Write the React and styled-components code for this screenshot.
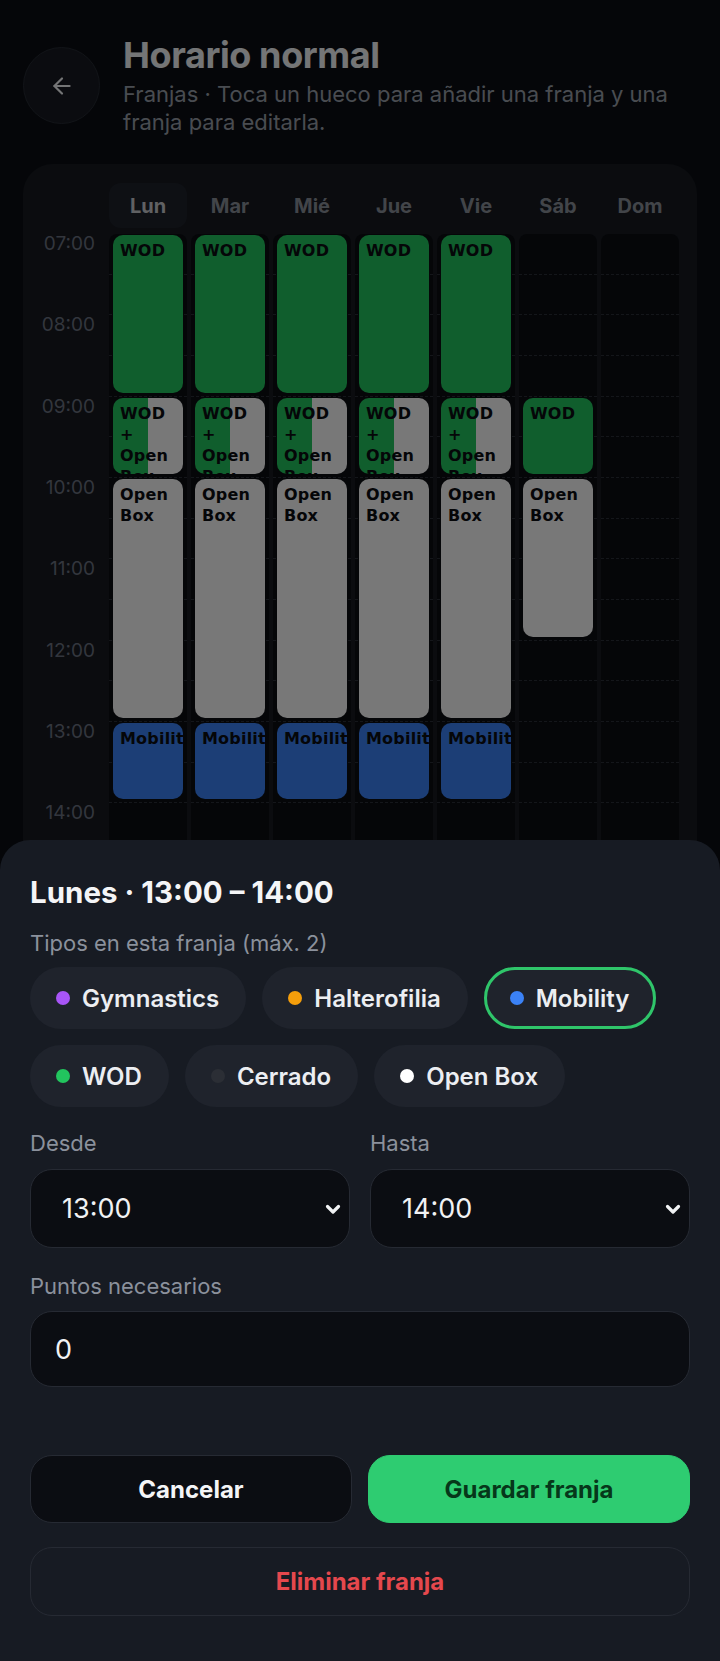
import React from "react";
import styled, { createGlobalStyle } from "styled-components";
import { ArrowLeft } from "lucide-react";

const GlobalStyle = createGlobalStyle`
  * { box-sizing: border-box; }
  body {
    margin: 0;
    background: #0c0e14;
    font-family: Inter, "Noto Sans", sans-serif;
  }
`;

const HOUR = 81.33;
const SLOT = HOUR / 2;
const START = 7;
const END = 22;

const TYPES = {
  wod: { label: "WOD", color: "#22c55e" },
  open: { label: "Open Box", color: "#fafafa" },
  mob: { label: "Mobility", color: "#3b82f6" },
};

const weekday = [
  { from: 7, to: 9, types: ["wod"] },
  { from: 9, to: 10, types: ["wod", "open"] },
  { from: 10, to: 13, types: ["open"] },
  { from: 13, to: 14, types: ["mob"] },
];

const days = [
  { name: "Lun", blocks: weekday, active: true },
  { name: "Mar", blocks: weekday },
  { name: "Mié", blocks: weekday },
  { name: "Jue", blocks: weekday },
  { name: "Vie", blocks: weekday },
  {
    name: "Sáb",
    blocks: [
      { from: 9, to: 10, types: ["wod"] },
      { from: 10, to: 12, types: ["open"] },
    ],
  },
  { name: "Dom", blocks: [] },
];

const chips = [
  { label: "Gymnastics", color: "#a855f7" },
  { label: "Halterofilia", color: "#f59e0b" },
  { label: "Mobility", color: "#3b82f6", selected: true },
  { label: "WOD", color: "#22c55e" },
  { label: "Cerrado", color: "#2b2e35" },
  { label: "Open Box", color: "#ffffff" },
];

const Screen = styled.div`
  position: relative;
  width: 720px;
  height: 1661px;
  overflow: hidden;
  background: #0c0e14;
`;

const Header = styled.header`
  display: flex;
  gap: 23px;
  padding: 34px 23px 0;
`;

const BackButton = styled.button`
  flex-shrink: 0;
  width: 77px;
  height: 77px;
  margin-top: 13px;
  border-radius: 50%;
  border: 1.5px solid #262a33;
  background: #181b22;
  color: #f3f4f6;
  display: flex;
  align-items: center;
  justify-content: center;
  padding: 0;
`;

const HeaderText = styled.div`
  display: flex;
  flex-direction: column;
`;

const Title = styled.h1`
  margin: 0;
  font-size: 36px;
  line-height: 42px;
  font-weight: 700;
  letter-spacing: -0.4px;
  color: #f3f4f6;
`;

const Subtitle = styled.p`
  margin: 4px 0 0;
  font-size: 22px;
  line-height: 28px;
  color: #9aa0aa;
`;

const Card = styled.section`
  margin: 28px 23px 0;
  padding: 19px 18px;
  background: #171a21;
  border-radius: 30px;
`;

const Row = styled.div`
  display: grid;
  grid-template-columns: 64px repeat(7, 1fr);
  column-gap: 4px;
`;

const DayLabel = styled.div`
  height: 45px;
  display: flex;
  align-items: center;
  justify-content: center;
  border-radius: 12px;
  font-size: 20px;
  font-weight: 700;
  background: ${(p) => (p.$active ? "#1f232b" : "transparent")};
  color: ${(p) => (p.$active ? "#c8cad0" : "#8b909a")};
`;

const Body = styled(Row)`
  margin-top: 6px;
`;

const TimeColumn = styled.div`
  display: flex;
  flex-direction: column;
`;

const HourLabel = styled.div`
  height: ${HOUR}px;
  flex-shrink: 0;
  padding-right: 10px;
  text-align: right;
  font-size: 19px;
  line-height: 20px;
  color: #6b7280;
`;

const DayColumn = styled.div`
  display: grid;
  grid-template-rows: repeat(${(END - START) * 2}, ${SLOT}px);
  background: #0b0d12;
  border-radius: 8px;
`;

const Slot = styled.div`
  grid-column: 1;
  grid-row: ${(p) => p.$row};
  border-bottom: 1px dashed #2a2e37;
`;

const Block = styled.div`
  grid-column: 1;
  grid-row: ${(p) => p.$start} / ${(p) => p.$end};
  margin: 1px 4px 4px;
  padding: 5px 7px;
  border-radius: 10px;
  overflow: hidden;
  background: ${(p) => p.$bg};
  font-family: "DejaVu Sans", sans-serif;
  font-weight: 700;
  font-size: 16px;
  line-height: 21px;
  letter-spacing: 0.2px;
  color: #0b0d12;
`;

const Overlay = styled.div`
  position: absolute;
  inset: 0;
  z-index: 5;
  background: rgba(0, 0, 0, 0.52);
`;

const Sheet = styled.div`
  position: absolute;
  left: 0;
  right: 0;
  bottom: 0;
  z-index: 6;
  background: #171b23;
  border-radius: 30px 30px 0 0;
  padding: 34px 30px 45px;
`;

const SheetTitle = styled.h2`
  margin: 0;
  font-size: 29.5px;
  line-height: 36px;
  font-weight: 700;
  color: #f4f5f7;
`;

const FieldLabel = styled.div`
  font-size: 22px;
  line-height: 28px;
  color: #8b919c;
  margin-top: ${(p) => p.$top || 0}px;
`;

const ChipWrap = styled.div`
  display: flex;
  flex-wrap: wrap;
  gap: 16px;
  margin-top: 10px;
`;

const Chip = styled.button`
  height: 62px;
  display: flex;
  align-items: center;
  gap: 12px;
  padding: 0 24px 0 23px;
  border-radius: 31px;
  border: 3px solid ${(p) => (p.$selected ? "#2fc56a" : "transparent")};
  background: #1f232c;
  font-family: inherit;
  font-size: 24px;
  font-weight: 600;
  color: #eceef2;
`;

const Dot = styled.span`
  width: 14px;
  height: 14px;
  border-radius: 50%;
  background: ${(p) => p.$color};
`;

const FieldGrid = styled.div`
  display: grid;
  grid-template-columns: 1fr 1fr;
  gap: 20px;
  margin-top: 22px;
`;

const Field = styled.div`
  display: flex;
  flex-direction: column;
  gap: 12px;
`;

const SelectBox = styled.div`
  position: relative;
  height: 79px;
`;

const Select = styled.select`
  width: 100%;
  height: 100%;
  appearance: none;
  background: #0b0d12;
  border: 1.5px solid #262a33;
  border-radius: 22px;
  color: #f1f2f4;
  font-family: inherit;
  font-size: 27px;
  padding: 0 31px;
`;

const Chevron = styled.svg`
  position: absolute;
  right: 8px;
  top: 50%;
  transform: translateY(-50%);
  pointer-events: none;
`;

const Input = styled.input`
  margin-top: 11px;
  width: 100%;
  height: 76px;
  background: #0b0d12;
  border: 1.5px solid #262a33;
  border-radius: 22px;
  color: #f1f2f4;
  font-family: inherit;
  font-size: 27px;
  padding: 0 24px;
`;

const ButtonRow = styled.div`
  display: grid;
  grid-template-columns: 1fr 1fr;
  gap: 16px;
  margin-top: 68px;
`;

const Button = styled.button`
  height: ${(p) => (p.$tall ? 69 : 68)}px;
  width: 100%;
  border-radius: 22px;
  font-family: inherit;
  font-size: 24px;
  font-weight: 700;
  border: 1.5px solid
    ${(p) => (p.$variant === "primary" ? "#2ecc71" : "#262a33")};
  background: ${(p) =>
    p.$variant === "primary"
      ? "#2ecc71"
      : p.$variant === "danger"
      ? "transparent"
      : "#0b0d12"};
  color: ${(p) =>
    p.$variant === "primary"
      ? "#06371a"
      : p.$variant === "danger"
      ? "#e5484d"
      : "#f4f5f7"};
  margin-top: ${(p) => p.$top || 0}px;
`;

function blockBg(types) {
  const cols = types.map((t) => TYPES[t].color);
  if (cols.length === 1) return cols[0];
  return `linear-gradient(90deg, ${cols[0]} 50%, ${cols[1]} 50%)`;
}

function ChevronDown() {
  return (
    <Chevron width="18" height="12" viewBox="0 0 18 12" fill="none">
      <path
        d="M3.5 3.5l5.5 5.5 5.5-5.5"
        stroke="#f1f2f4"
        strokeWidth="3.2"
        strokeLinecap="round"
        strokeLinejoin="round"
      />
    </Chevron>
  );
}

export default function App() {
  const hours = [];
  for (let h = START; h < END; h++) hours.push(h);
  const slots = [];
  for (let i = 1; i <= (END - START) * 2; i++) slots.push(i);

  return (
    <Screen>
      <GlobalStyle />
      <Header>
        <BackButton>
          <ArrowLeft size={26} strokeWidth={2} />
        </BackButton>
        <HeaderText>
          <Title>Horario normal</Title>
          <Subtitle>
            Franjas · Toca un hueco para añadir una franja y una franja para
            editarla.
          </Subtitle>
        </HeaderText>
      </Header>

      <Card>
        <Row>
          <div />
          {days.map((d) => (
            <DayLabel key={d.name} $active={d.active}>
              {d.name}
            </DayLabel>
          ))}
        </Row>
        <Body>
          <TimeColumn>
            {hours.map((h) => (
              <HourLabel key={h}>{String(h).padStart(2, "0")}:00</HourLabel>
            ))}
          </TimeColumn>
          {days.map((d) => (
            <DayColumn key={d.name}>
              {slots.map((s) => (
                <Slot key={s} $row={s} />
              ))}
              {d.blocks.map((b) => (
                <Block
                  key={b.from}
                  $start={(b.from - START) * 2 + 1}
                  $end={(b.to - START) * 2 + 1}
                  $bg={blockBg(b.types)}
                >
                  {b.types.map((t) => TYPES[t].label).join(" + ")}
                </Block>
              ))}
            </DayColumn>
          ))}
        </Body>
      </Card>

      <Overlay />

      <Sheet>
        <SheetTitle>Lunes · 13:00 – 14:00</SheetTitle>
        <FieldLabel $top={19}>Tipos en esta franja (máx. 2)</FieldLabel>
        <ChipWrap>
          {chips.map((c) => (
            <Chip key={c.label} $selected={c.selected}>
              <Dot $color={c.color} />
              {c.label}
            </Chip>
          ))}
        </ChipWrap>

        <FieldGrid>
          <Field>
            <FieldLabel>Desde</FieldLabel>
            <SelectBox>
              <Select defaultValue="13:00">
                <option>13:00</option>
              </Select>
              <ChevronDown />
            </SelectBox>
          </Field>
          <Field>
            <FieldLabel>Hasta</FieldLabel>
            <SelectBox>
              <Select defaultValue="14:00">
                <option>14:00</option>
              </Select>
              <ChevronDown />
            </SelectBox>
          </Field>
        </FieldGrid>

        <FieldLabel $top={24}>Puntos necesarios</FieldLabel>
        <Input type="text" defaultValue="0" />

        <ButtonRow>
          <Button>Cancelar</Button>
          <Button $variant="primary">Guardar franja</Button>
        </ButtonRow>
        <Button $variant="danger" $tall $top={24}>
          Eliminar franja
        </Button>
      </Sheet>
    </Screen>
  );
}
